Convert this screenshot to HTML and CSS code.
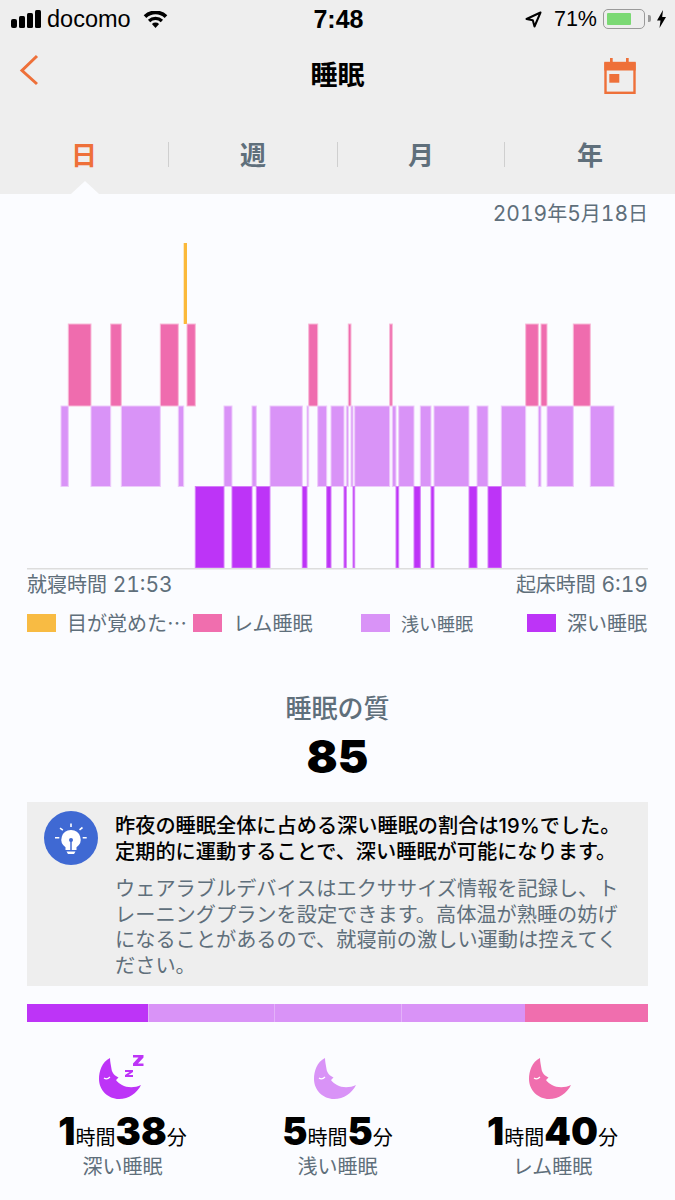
FILE: index.html
```html
<!DOCTYPE html>
<html lang="ja">
<head>
  <meta charset="UTF-8" />
  <meta name="viewport" content="width=device-width, initial-scale=1.0" />
  <title>睡眠</title>
  <link rel="stylesheet" href="styles.css">
</head>
<body>

<header class="top">
  <!-- Status bar -->
  <div class="status">
    <div class="status-left">
      <svg class="signal" width="30" height="18" viewBox="0 0 30 18"><rect x="0" y="9" width="6" height="9" rx="2"/><rect x="8" y="6" width="6" height="12" rx="1.500"/><rect x="16" y="3" width="6" height="15" rx="1.500"/><rect x="24" y="0" width="6" height="18" rx="1.500"/></svg>
      <span class="carrier">docomo</span>
      <svg class="wifi" width="25" height="17" viewBox="0 0 26 18"><path d="M13 18l-3.800-4.200a5.500 5.500 0 0 1 7.600 0z"/><path d="M7.400 11.800L5 9.200a11.500 11.500 0 0 1 16 0l-2.400 2.600a8 8 0 0 0-11.200 0z"/><path d="M3.300 7.300L.5 4.500a18 18 0 0 1 25 0l-2.800 2.800a14.300 14.300 0 0 0-19.400 0z"/></svg>
    </div>
    <div class="time">7:48</div>
    <div class="status-right">
      <svg class="arrow" width="17" height="17" viewBox="0 0 17 17"><path d="M15.500 1.500L1.500 8l6.300 1.200 1.700 6.300z" fill="none" stroke="#000" stroke-width="2" stroke-linejoin="round"/></svg>
      <span class="percent">71%</span>
      <div class="battery"><div class="battery-fill"></div></div>
      <svg class="bolt" width="9" height="18" viewBox="0 0 9 18"><path d="M6 0L0 10.500h3.500L2.500 18 9 7H5.200z"/></svg>
    </div>
  </div>

  <!-- Nav -->
  <div class="nav">
    <svg class="back" width="20" height="32" viewBox="0 0 20 32"><path d="M18 2L3 16.500 18 30" fill="none" stroke="#ee7039" stroke-width="3"/></svg>
    <h1>睡眠</h1>
    <svg class="cal" width="32" height="36" viewBox="0 0 32 36"><rect x="0.300" y="4.500" width="31.400" height="8" fill="#ee7039"/><rect x="6" y="0" width="2.700" height="6" fill="#ee7039"/><rect x="22" y="0" width="2.700" height="6" fill="#ee7039"/><rect x="1.500" y="5" width="29" height="29.800" fill="none" stroke="#ee7039" stroke-width="2.400"/><rect x="5.300" y="16" width="10" height="8.700" fill="#ee7039"/></svg>
  </div>

  <!-- Tabs -->
  <div class="tabs">
    <div class="tab active">日</div>
    <div class="tab">週</div>
    <div class="tab">月</div>
    <div class="tab">年</div>
  </div>
</header>

<main>
  <div class="date"><span class="num">2019</span>年<span class="num">5</span>月<span class="num">18</span>日</div>

  <svg class="chart" width="675" height="327" viewBox="0 0 675 327">
    <g class="awake">
      <rect x="183.700" y="0" width="3.300" height="81"/>
    </g>
    <g class="rem">
      <rect x="68.300" y="81" width="22.700" height="82"/>
      <rect x="110.700" y="81" width="10.600" height="82"/>
      <rect x="160.300" y="81" width="18" height="82"/>
      <rect x="187" y="81" width="8.300" height="82"/>
      <rect x="308.700" y="81" width="9" height="82"/>
      <rect x="348.300" y="81" width="2.700" height="82"/>
      <rect x="389.700" y="81" width="2.600" height="82"/>
      <rect x="525.700" y="81" width="12.600" height="82"/>
      <rect x="541" y="81" width="6" height="82"/>
      <rect x="573.300" y="81" width="17" height="82"/>
    </g>
    <g class="light">
      <rect x="61" y="163" width="7.300" height="80.500"/>
      <rect x="91" y="163" width="19.700" height="80.500"/>
      <rect x="121.300" y="163" width="39" height="80.500"/>
      <rect x="178.300" y="163" width="5.400" height="80.500"/>
      <rect x="224" y="163" width="8" height="80.500"/>
      <rect x="252" y="163" width="4.300" height="80.500"/>
      <rect x="270" y="163" width="32.300" height="80.500"/>
      <rect x="307" y="163" width="1.700" height="80.500"/>
      <rect x="317.700" y="163" width="9" height="80.500"/>
      <rect x="331" y="163" width="13" height="80.500"/>
      <rect x="346.300" y="163" width="2" height="80.500"/>
      <rect x="351" y="163" width="2" height="80.500"/>
      <rect x="354.700" y="163" width="35" height="80.500"/>
      <rect x="392.300" y="163" width="3.700" height="80.500"/>
      <rect x="398.700" y="163" width="15.300" height="80.500"/>
      <rect x="420.300" y="163" width="10.700" height="80.500"/>
      <rect x="434" y="163" width="35" height="80.500"/>
      <rect x="477" y="163" width="11" height="80.500"/>
      <rect x="501.300" y="163" width="24.400" height="80.500"/>
      <rect x="538.300" y="163" width="2.700" height="80.500"/>
      <rect x="547" y="163" width="26.300" height="80.500"/>
      <rect x="590.300" y="163" width="23.700" height="80.500"/>
    </g>
    <g class="deep">
      <rect x="195.300" y="243.500" width="28.700" height="81.500"/>
      <rect x="232" y="243.500" width="20" height="81.500"/>
      <rect x="256.300" y="243.500" width="13.700" height="81.500"/>
      <rect x="302.300" y="243.500" width="4.700" height="81.500"/>
      <rect x="326.700" y="243.500" width="4.300" height="81.500"/>
      <rect x="344" y="243.500" width="2.300" height="81.500"/>
      <rect x="353" y="243.500" width="1.700" height="81.500"/>
      <rect x="396" y="243.500" width="2.700" height="81.500"/>
      <rect x="414" y="243.500" width="6.300" height="81.500"/>
      <rect x="431" y="243.500" width="3" height="81.500"/>
      <rect x="469" y="243.500" width="8" height="81.500"/>
      <rect x="488" y="243.500" width="13.300" height="81.500"/>
    </g>
    <rect class="axis" x="27" y="325" width="621" height="1.500"/>
  </svg>

  <div class="times">
    <span>就寝時間 <span class="num">21:53</span></span>
    <span>起床時間 <span class="num">6:19</span></span>
  </div>

  <div class="legend">
    <div class="legend-item"><i class="swatch swatch-awake"></i>目が覚めた…</div>
    <div class="legend-item"><i class="swatch swatch-rem"></i>レム睡眠</div>
    <div class="legend-item legend-small"><i class="swatch swatch-light"></i>浅い睡眠</div>
    <div class="legend-item"><i class="swatch swatch-deep"></i>深い睡眠</div>
  </div>

  <div class="quality">
    <h2>睡眠の質</h2>
    <div class="score">85</div>
  </div>

  <div class="tip">
    <svg class="bulb" width="54" height="54" viewBox="0 0 54 54">
      <circle cx="27" cy="27" r="27" fill="#3f69d3"/>
      <path d="M27 19a9.500 9.500 0 0 0-5.500 17.300V39h11v-2.700A9.500 9.500 0 0 0 27 19z" fill="#fff"/>
      <path d="M22.500 40.500h9L30 43h-6z" fill="#fff"/>
      <circle cx="27" cy="29" r="2" fill="#3f69d3"/>
      <path d="M27 29v10" stroke="#3f69d3" stroke-width="1.500"/>
      <path d="M27 12.400v3.600M16 17.200l2.900 1.900M38.500 16.500l-3 2.300M11 26.700h4.300M38.700 26.700h4" stroke="#fff" stroke-width="1.600" fill="none"/>
    </svg>
    <div class="tip-body">
      <p class="tip-title">昨夜の睡眠全体に占める深い睡眠の割合は19%でした。<br>定期的に運動することで、深い睡眠が可能になります。</p>
      <p class="tip-text">ウェアラブルデバイスはエクササイズ情報を記録し、ト<br>レーニングプランを設定できます。高体温が熟睡の妨げ<br>になることがあるので、就寝前の激しい運動は控えてく<br>ださい。</p>
    </div>
  </div>

  <div class="ratio">
    <div class="seg seg-deep" style="flex-grow: 99"></div>
    <div class="seg seg-light" style="flex-grow: 102"></div>
    <div class="seg seg-light" style="flex-grow: 102"></div>
    <div class="seg seg-light" style="flex-grow: 101"></div>
    <div class="seg seg-rem" style="flex-grow: 100"></div>
  </div>

  <div class="stats">
    <div class="stat">
      <svg class="moon" width="48" height="46" viewBox="0 -3 48 46" fill="#bd34f7">
        <path d="M11 0C3 4 0 13 0 21c0 11 9 20 20 20 10 0 18-6 22-14-6 3-14 3-19 0-3-2-5-3-6-5l2.500-2.500C16 18 13 15 12.500 11 12 7 11 4 11 0z"/>
        <path d="M5 20c2 1.500 4 1 6-1" fill="none" stroke="#fff" stroke-width="1.200"/>
        <path d="M34-3h10.500v2.500L39 5.500h5.500V8H34V5.500L39.500-.5H34zM26 12h8v2l-4.500 3H34v2h-8v-2l4.500-3H26z"/>
      </svg>
      <div class="value"><b>1</b>時間<b>38</b>分</div>
      <div class="label">深い睡眠</div>
    </div>
    <div class="stat">
      <svg class="moon" width="48" height="46" viewBox="0 -3 48 46" fill="#d993f7">
        <path d="M11 0C3 4 0 13 0 21c0 11 9 20 20 20 10 0 18-6 22-14-6 3-14 3-19 0-3-2-5-3-6-5l2.500-2.500C16 18 13 15 12.500 11 12 7 11 4 11 0z"/>
        <path d="M5 20c2 1.500 4 1 6-1" fill="none" stroke="#fff" stroke-width="1.200"/>
      </svg>
      <div class="value"><b>5</b>時間<b>5</b>分</div>
      <div class="label">浅い睡眠</div>
    </div>
    <div class="stat">
      <svg class="moon" width="48" height="46" viewBox="0 -3 48 46" fill="#f06eae">
        <path d="M11 0C3 4 0 13 0 21c0 11 9 20 20 20 10 0 18-6 22-14-6 3-14 3-19 0-3-2-5-3-6-5l2.500-2.500C16 18 13 15 12.500 11 12 7 11 4 11 0z"/>
        <path d="M5 20c2 1.500 4 1 6-1" fill="none" stroke="#fff" stroke-width="1.200"/>
      </svg>
      <div class="value"><b>1</b>時間<b>40</b>分</div>
      <div class="label">レム睡眠</div>
    </div>
  </div>
</main>

</body>
</html>
```

FILE: styles.css
```css
* {
  margin: 0;
  padding: 0;
  box-sizing: border-box;
}

html, body {
  width: 675px;
  height: 1200px;
  overflow: hidden;
  font-family: Inter, "Noto Sans CJK JP", sans-serif;
  background: #fbfcff;
  color: #5f6f7b;
}

.num {
  font-size: 21px;
  font-variant-numeric: tabular-nums;
}

/* Header */
.top {
  height: 194px;
  background: #eeeeee;
  position: relative;
}

.top::after {
  content: "";
  position: absolute;
  left: 71px;
  bottom: 0;
  border-left: 14px solid transparent;
  border-right: 14px solid transparent;
  border-bottom: 13px solid #fbfcff;
}

.status {
  height: 38px;
  padding: 0 9px 0 11px;
  display: grid;
  grid-template-columns: 1fr auto 1fr;
  align-items: center;
  color: #000;
  font-family: "Liberation Sans", sans-serif;
}

.status-left, .status-right {
  display: flex;
  align-items: center;
}

.status-right {
  justify-content: flex-end;
}

.carrier {
  font-size: 23.500px;
  margin-left: 6px;
}

.wifi {
  margin-left: 12px;
}

.time {
  font-size: 25px;
  font-weight: 700;
}

.percent {
  font-size: 21.500px;
  margin-left: 12px;
}

.battery {
  width: 42px;
  height: 20px;
  margin-left: 6px;
  padding: 3px;
  border: 1.500px solid #9a9a9a;
  border-radius: 5px;
  position: relative;
}

.battery::after {
  content: "";
  position: absolute;
  right: -7px;
  top: 5px;
  width: 3px;
  height: 7px;
  background: #9a9a9a;
  border-radius: 0 2px 2px 0;
}

.battery-fill {
  width: 71%;
  height: 100%;
  background: #7bd974;
  border-radius: 1px;
}

.bolt {
  margin-left: 12px;
}

.nav {
  height: 60px;
  padding: 8px 39px 0 19px;
  display: flex;
  justify-content: space-between;
  align-items: center;
  position: relative;
}

.back {
  margin-bottom: 4px;
}

.cal {
  margin-top: 8px;
}

.nav h1 {
  position: absolute;
  left: 0;
  right: 0;
  top: 16px;
  text-align: center;
  font-size: 27px;
  color: #000;
}

.tabs {
  display: grid;
  grid-template-columns: 168px 169px 167px 1fr;
  grid-template-rows: 25px;
  margin-top: 44px;
}

.tab {
  font-size: 26px;
  font-weight: 700;
  line-height: 27px;
  text-align: center;
  border-left: 1px solid #cfcfcf;
}

.tab:first-child {
  border-left: 0;
}

.tab.active {
  color: #ee7039;
}

/* Chart */
main {
  padding: 0 27px;
}

.date {
  padding-top: 4px;
  height: 49px;
  font-size: 20px;
  text-align: right;
}

.chart {
  display: block;
  margin-left: -27px;
}

.awake rect { fill: #fbb93a; }
.rem rect { fill: #ef6cae; stroke: #f8b9d8; stroke-width: 1; }
.light rect { fill: #d993f7; stroke: #edcafb; stroke-width: 1; }
.deep rect { fill: #bd34f7; stroke: #d57df9; stroke-width: 1; }
.axis { fill: #dddddd; }

.times {
  display: flex;
  justify-content: space-between;
  font-size: 20px;
  line-height: 24px;
  margin-top: 3px;
}

.legend {
  display: grid;
  grid-template-columns: 166px 168px 166px 121px;
  margin-top: 15px;
  font-family: "Noto Sans CJK JP", sans-serif;
  font-size: 20px;
  line-height: 22px;
}

.legend-item {
  display: flex;
  align-items: center;
  white-space: nowrap;
}

.legend-small {
  font-size: 18px;
}

.swatch {
  width: 29px;
  height: 18px;
  margin-right: 11px;
}

.swatch-awake { background: #f8bb43; }
.swatch-rem { background: #f06eae; }
.swatch-light { background: #d993f7; }
.swatch-deep { background: #bd34f7; }

.quality {
  margin-top: 56px;
  text-align: center;
}

.quality h2 {
  font-size: 26px;
  font-weight: 500;
  line-height: 38px;
}

.score {
  font-size: 46px;
  font-weight: 900;
  line-height: 56px;
  color: #000;
}

/* Tip box */
.tip {
  margin-top: 18px;
  height: 184px;
  padding: 9px 17px;
  background: #eeeeee;
  display: flex;
  gap: 17px;
}

.tip-title {
  font-size: 20.200px;
  line-height: 26px;
  font-weight: 500;
  color: #000;
  white-space: nowrap;
  margin-top: 2px;
}

.tip-text {
  margin-top: 11px;
  font-size: 20.200px;
  line-height: 25.700px;
  white-space: nowrap;
}

/* Ratio bar */
.ratio {
  display: flex;
  height: 18px;
  margin-top: 18px;
}

.seg {
  flex-basis: 0;
}

.seg-deep { background: #bd34f7; }
.seg-light { background: #d993f7; border-left: 1px solid #e3b2f9; }
.seg-rem { background: #f06eae; }

/* Sleep stats */
.stats {
  display: grid;
  grid-template-columns: repeat(3, 1fr);
  margin: 33px -12px 0;
}

.stat {
  text-align: center;
}

.moon {
  display: block;
  margin: 0 auto;
}

.value {
  font-size: 20px;
  color: #000;
  line-height: 44px;
  margin-top: 8px;
  white-space: nowrap;
}

.value b {
  font-size: 38px;
  font-weight: 900;
}

.label {
  font-size: 20px;
  line-height: 26px;
  margin-top: -6px;
}
```
